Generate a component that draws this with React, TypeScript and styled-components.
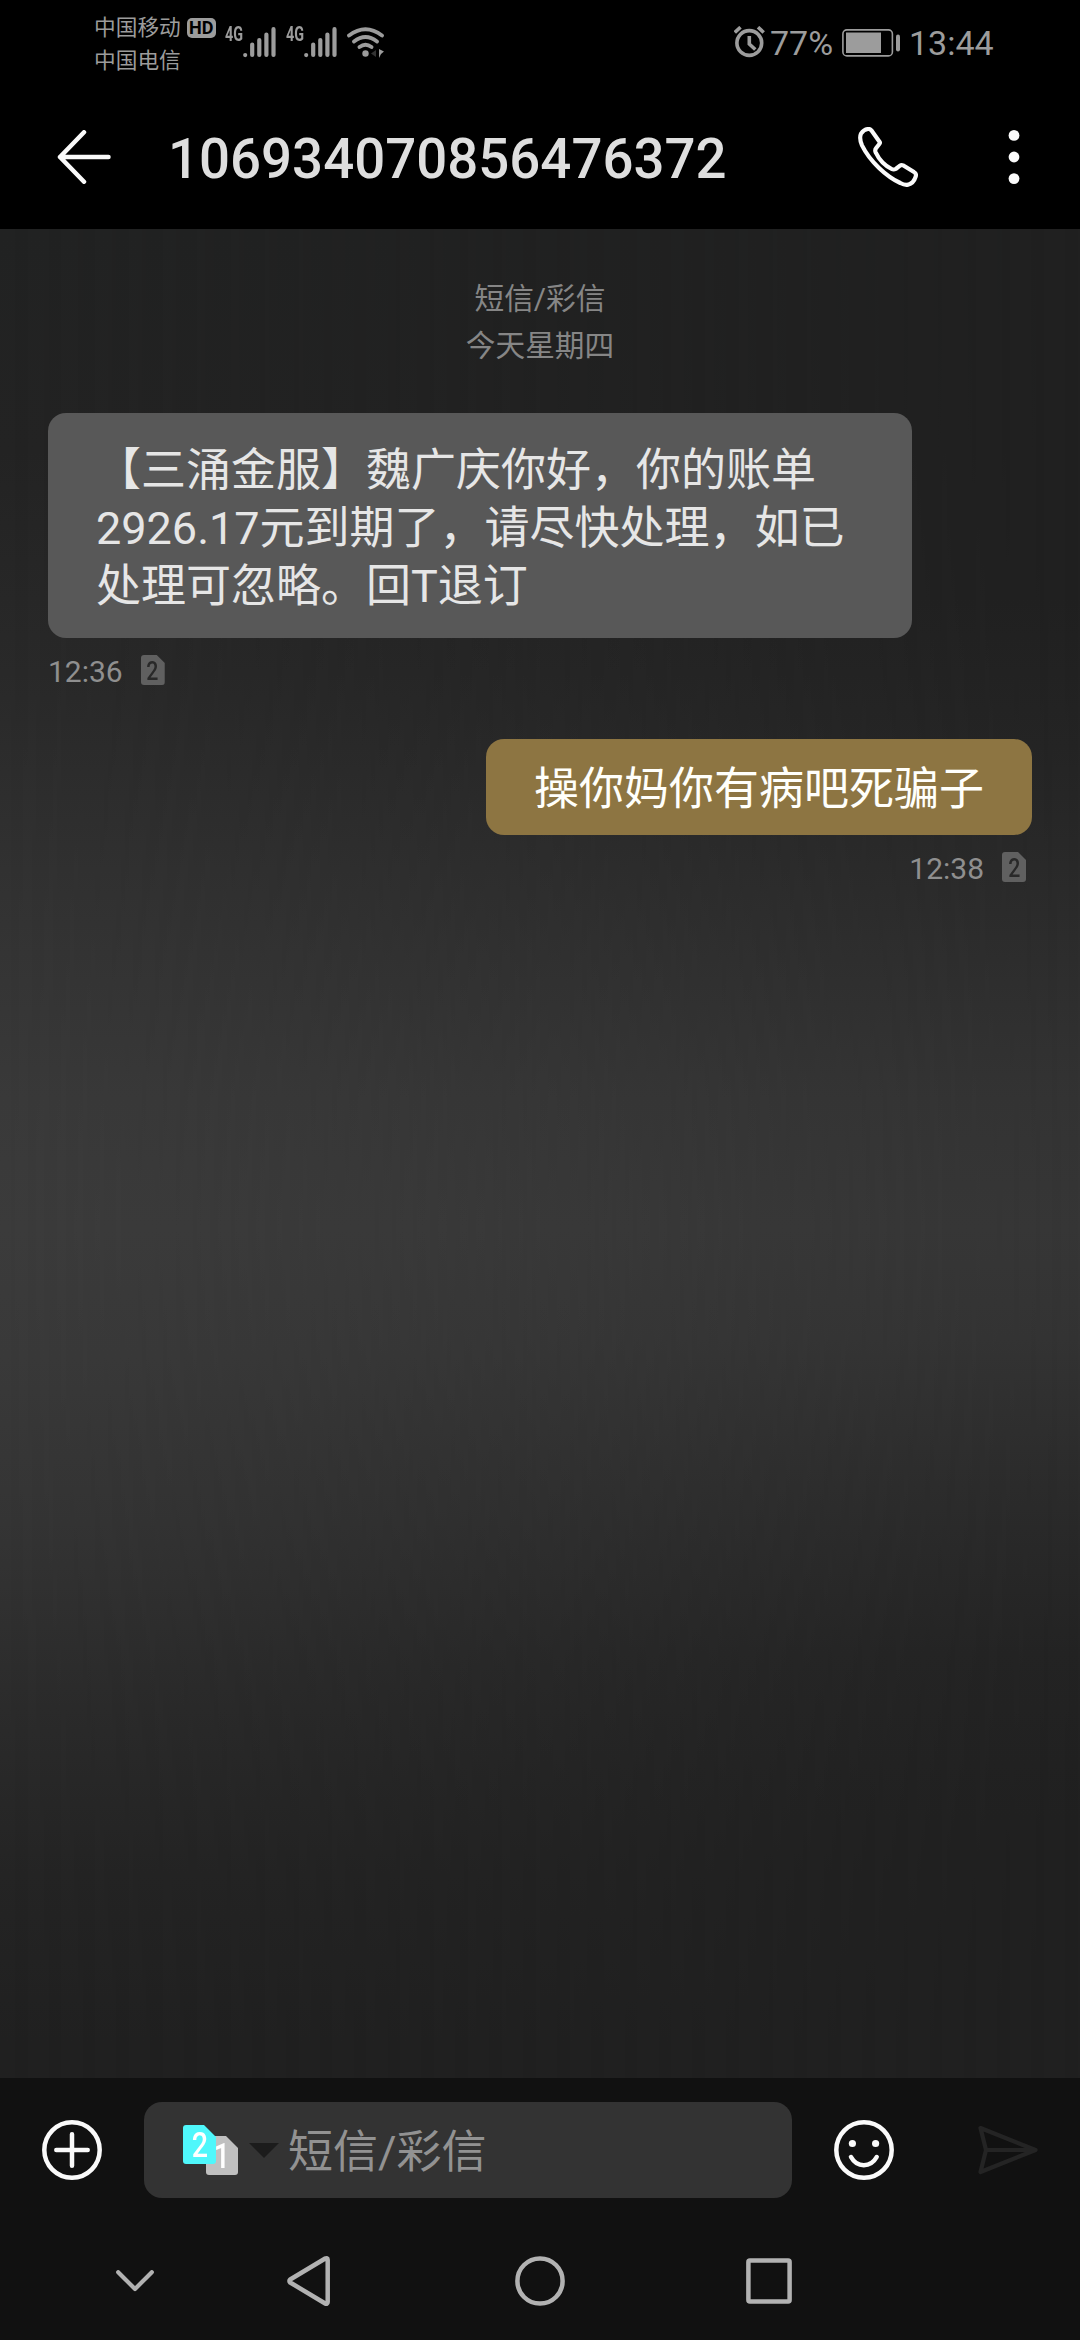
import React from 'react';
import styled, { createGlobalStyle } from 'styled-components';

const Global = createGlobalStyle`
  * { box-sizing: border-box; }
  body { margin: 0; background: #000; }
  svg { display: block; flex: none; }
`;

const Screen = styled.div`
  width: 1080px;
  height: 2340px;
  display: flex;
  flex-direction: column;
  overflow: hidden;
  background: #111;
  font-family: Roboto, 'Noto Sans CJK SC', sans-serif;
`;

const StatusBar = styled.div`
  height: 84px;
  flex: none;
  display: flex;
  justify-content: space-between;
  padding: 0 88px 0 94px;
  background: #000;
  color: #9c9c9c;
`;

const StatusGroup = styled.div`
  display: flex;
  align-items: flex-start;
`;

const Carriers = styled.div`
  display: flex;
  flex-direction: column;
  padding-top: 11px;
  font-size: 21.7px;
  line-height: 33px;
`;

const HdBadge = styled.div`
  width: 29px;
  height: 20px;
  margin: 18px 9px 0 6px;
  border-radius: 5px;
  background: #9c9c9c;
  color: #000;
  font-size: 18px;
  font-weight: 700;
  line-height: 20px;
  text-align: center;
`;

const Network = styled.div`
  display: flex;
  margin-right: 10px;
`;

const NetworkLabel = styled.span`
  width: 18px;
  margin-top: 25px;
  font-size: 20px;
  font-weight: 700;
  line-height: 18px;

  span {
    display: inline-block;
    transform: scaleX(0.72);
    transform-origin: left;
  }
`;

const Offset = styled.div<{ $top: number }>`
  padding-top: ${(p) => p.$top}px;
`;

const StatusText = styled.span<{ $width: number; $indent: number }>`
  width: ${(p) => p.$width}px;
  padding: 22px 0 0 ${(p) => p.$indent}px;
  font-size: 34px;
  line-height: 42px;
  white-space: nowrap;
`;

const Header = styled.header`
  height: 145px;
  flex: none;
  display: flex;
  align-items: center;
  padding: 0 60px 0 57px;
  background: #000;
`;

const Title = styled.h1`
  margin: 4px 0 0 57px;
  flex: 1;
  color: #dedede;
  font-size: 54.6px;
  font-weight: 500;
  line-height: 64px;
`;

const HeaderIcons = styled.div`
  display: flex;
  align-items: center;
  gap: 90px;
`;

const Chat = styled.main`
  position: relative;
  isolation: isolate;
  flex: 1;
  display: flex;
  flex-direction: column;
  padding: 46px 48px 0;
  background: linear-gradient(180deg, #202020 0%, #202020 20%, #242424 28%, #2b2b2b 37%, #333333 47%, #363636 54%, #333333 60%, #2b2b2b 68%, #232323 77%, #202020 86%, #202020 100%);

  &::before {
    content: '';
    position: absolute;
    inset: 0;
    z-index: -1;
    background: linear-gradient(180deg, #212222 0%, #232323 12%, #292929 24%, #323232 36%, #393939 47%, #3b3b3b 54%, #393939 61%, #343434 70%, #2b2b2b 80%, #242424 89%, #202020 98%);
    mask-image: linear-gradient(90deg, #000 0%, transparent 100%);
  }
`;

const DateLabel = styled.div`
  color: #868686;
  font-size: 29.7px;
  line-height: 47px;
  text-align: center;
`;

const Message = styled.section<{ $sent?: boolean }>`
  display: flex;
  flex-direction: column;
  align-items: ${(p) => (p.$sent ? 'flex-end' : 'flex-start')};
  margin-top: ${(p) => (p.$sent ? 54 : 44)}px;
`;

const Bubble = styled.div<{ $sent?: boolean }>`
  width: ${(p) => (p.$sent ? 546 : 864)}px;
  height: ${(p) => (p.$sent ? 96 : 225)}px;
  padding: ${(p) => (p.$sent ? '22px 48px 0' : '29px 48px 0')};
  border-radius: 18px;
  background: ${(p) => (p.$sent ? '#8d7542' : '#585858')};
  color: ${(p) => (p.$sent ? '#fffffb' : '#e6e6e6')};
  font-size: 45px;
  line-height: 58px;
  white-space: nowrap;
`;

const Meta = styled.div<{ $sent?: boolean }>`
  display: flex;
  align-items: center;
  gap: 18px;
  height: 30px;
  margin-top: 17px;
  padding-right: ${(p) => (p.$sent ? 6 : 0)}px;
  color: #8f8f8f;
  font-size: 30px;
  line-height: 30px;
`;

const MetaTime = styled.span`
  padding-top: 3px;
`;

const SimCard = styled.div<{ $fill: string; $ink: string; $w: number; $h: number; $size: number; $cut: number }>`
  width: ${(p) => p.$w}px;
  height: ${(p) => p.$h}px;
  border-radius: 3px;
  background: ${(p) => p.$fill};
  color: ${(p) => p.$ink};
  clip-path: polygon(0 0, calc(100% - ${(p) => p.$cut}px) 0, 100% ${(p) => p.$cut}px, 100% 100%, 0 100%);
  font-size: ${(p) => p.$size}px;
  font-weight: 500;
  line-height: ${(p) => p.$h + 2}px;
  text-align: center;

  span {
    display: inline-block;
    transform: scaleX(0.82);
  }
`;

const Composer = styled.footer`
  height: 144px;
  flex: none;
  display: flex;
  align-items: center;
  padding: 0 42px;
  background: #111;
`;

const Field = styled.div`
  width: 648px;
  height: 96px;
  margin: 0 42px;
  padding-left: 39px;
  display: flex;
  align-items: center;
  border-radius: 18px;
  background: #333;
`;

const SimPair = styled.div`
  position: relative;
  width: 55px;
  height: 50px;
  margin-right: 11px;
`;

const Front = styled.div`
  position: absolute;
  left: 0;
  top: 0;
`;

const Back = styled.div`
  position: absolute;
  right: 0;
  bottom: 0;
`;

const Placeholder = styled.span`
  margin: 5px 0 0 9px;
  color: #929292;
  font-size: 45px;
  line-height: 60px;
`;

const SendSlot = styled.div`
  margin-left: auto;
`;

const NavBar = styled.nav`
  height: 118px;
  flex: none;
  display: flex;
  align-items: center;
  padding: 0 0 0 116px;
  background: #111;
`;

const NavItem = styled.div<{ $left?: number }>`
  margin-left: ${(p) => p.$left ?? 0}px;
`;

const Signal = () => (
  <svg width="33" height="31" viewBox="0 0 33 31" stroke="#9c9c9c" strokeWidth="4.2" strokeLinecap="round">
    <path d="M2.2 28v.1M9.2 17.500V28M16.300 13V28M23.400 7.500V28M30.500 2.200V28" />
  </svg>
);

const Wifi = () => (
  <svg width="38" height="32" viewBox="0 0 38 32" fill="none" stroke="#9c9c9c" strokeWidth="3.8" strokeLinecap="round">
    <path d="M2 8.500Q18.500-4 35 8.500M7 14.500Q18.500 5.500 30 14.500M12.500 20Q18.500 15.500 24.500 20" />
    <circle cx="18.500" cy="26.500" r="3.200" fill="#9c9c9c" stroke="none" />
    <path d="M29 23v7l-5-3.500z" fill="#333" stroke="none" />
    <path d="M32 22v9l2-4 3-2.500z" fill="#9c9c9c" stroke="none" />
  </svg>
);

const Alarm = () => (
  <svg width="31" height="32" viewBox="0 0 31 32" fill="none" stroke="#9c9c9c" strokeWidth="3.6">
    <circle cx="15.300" cy="17" r="12.400" />
    <path d="M15.300 10v8l6 5.500" strokeWidth="3.600" />
    <path d="M.8 6.500L6.500 1.200M24 1.200l5.700 5.300" strokeWidth="3.600" />
  </svg>
);

const Battery = () => (
  <svg width="59" height="28" viewBox="0 0 59 28" fill="#9c9c9c">
    <rect x=".9" y=".9" width="49.500" height="26" rx="4" fill="none" stroke="#9c9c9c" strokeWidth="1.600" />
    <rect x="4" y="3.500" width="35" height="20.500" />
    <rect x="54" y="5.500" width="4" height="17" rx="2" />
  </svg>
);

const BackArrow = () => (
  <svg width="54" height="54" viewBox="0 0 54 54" fill="none" stroke="#fafafa" strokeWidth="4.500" strokeLinecap="round" strokeLinejoin="round">
    <path d="M51.500 27H3M27 2.300L3 27l24 24.700" />
  </svg>
);

const Phone = () => (
  <svg width="60" height="60" viewBox="894 111 180 180" fill="none" stroke="#fafafa" strokeWidth="12.500" strokeLinejoin="round">
    <path d="M903 131Q912 118 924 117Q930 116 934 121L959 156Q961 159 958 162L948 175Q944 180 947 187C957 208 977 228 995 237Q1001 240 1007 237L1020 227Q1024 224 1029 226L1062 246Q1070 250 1067 260Q1061 280 1044 284Q1034 286 1021 279C980 260 930 215 906 166C900 152 898 142 903 131Z" />
  </svg>
);

const More = () => (
  <svg width="12" height="54" viewBox="0 0 12 54" fill="#fafafa">
    <circle cx="6" cy="5.400" r="5.400" />
    <circle cx="6" cy="27" r="5.400" />
    <circle cx="6" cy="48.600" r="5.400" />
  </svg>
);

const Add = () => (
  <svg width="60" height="60" viewBox="0 0 60 60" fill="none" stroke="#fafafa" strokeWidth="4.500" strokeLinecap="round">
    <circle cx="30" cy="30" r="27.700" />
    <path d="M14.300 30h31.400M30 14.300v31.400" />
  </svg>
);

const Caret = () => (
  <svg width="30" height="15" viewBox="0 0 30 15">
    <path d="M0 0h30L15 15z" fill="#1c1c1c" />
  </svg>
);

const Smile = () => (
  <svg width="60" height="60" viewBox="0 0 60 60" fill="none" stroke="#fafafa" strokeWidth="4.500" strokeLinecap="round">
    <circle cx="30" cy="30" r="27.700" />
    <path d="M17 37Q21.500 45.200 29.800 45.200T42.700 37" />
    <circle cx="18.400" cy="23.500" r="3.600" fill="#fafafa" stroke="none" />
    <circle cx="41.600" cy="23.500" r="3.600" fill="#fafafa" stroke="none" />
  </svg>
);

const Send = () => (
  <svg width="60" height="50" viewBox="0 0 60 50" fill="none" stroke="#242424" strokeWidth="4.200" strokeLinecap="round" strokeLinejoin="round">
    <path d="M2.500 3L57.500 25 2.500 47 8 25zM8 25h49" />
  </svg>
);

const Chevron = () => (
  <svg width="38" height="22" viewBox="0 0 38 22" fill="none" stroke="#b2b2b2" strokeWidth="4.200" strokeLinecap="round" strokeLinejoin="round">
    <path d="M2.200 2.200L19 19 35.800 2.200" />
  </svg>
);

const NavBack = () => (
  <svg width="43" height="50" viewBox="0 0 43 50" fill="none" stroke="#b2b2b2" strokeWidth="4.500" strokeLinejoin="round">
    <path d="M3.200 23.500L37.800 2.700Q40.700 1.500 40.700 4V46Q40.700 48.500 37.800 47.300L3.200 26.500Q1.600 25 3.200 23.500Z" />
  </svg>
);

const NavHome = () => (
  <svg width="50" height="50" viewBox="0 0 50 50" fill="none" stroke="#b2b2b2" strokeWidth="4.500">
    <circle cx="25" cy="25" r="22.600" />
  </svg>
);

const NavRecent = () => (
  <svg width="46" height="46" viewBox="0 0 46 46" fill="none" stroke="#b2b2b2" strokeWidth="4.500">
    <rect x="2.400" y="2.400" width="41.200" height="41.200" rx="1.500" />
  </svg>
);

const SmallSim = () => (
  <SimCard $fill="#606060" $ink="#292929" $w={24} $h={30} $size={26} $cut={8}><span>2</span></SimCard>
);

export default function App() {
  return (
    <Screen>
      <Global />
      <StatusBar>
        <StatusGroup>
          <Carriers>
            <span>中国移动</span>
            <span>中国电信</span>
          </Carriers>
          <HdBadge>HD</HdBadge>
          {[0, 1].map((n) => (
            <Network key={n}>
              <NetworkLabel><span>4G</span></NetworkLabel>
              <Offset $top={27}><Signal /></Offset>
            </Network>
          ))}
          <Offset $top={27}><Wifi /></Offset>
        </StatusGroup>
        <StatusGroup>
          <Offset $top={26}><Alarm /></Offset>
          <StatusText $width={77} $indent={5}>77%</StatusText>
          <Offset $top={29}><Battery /></Offset>
          <StatusText $width={91} $indent={8}>13:44</StatusText>
        </StatusGroup>
      </StatusBar>
      <Header>
        <BackArrow />
        <Title>106934070856476372</Title>
        <HeaderIcons>
          <Phone />
          <More />
        </HeaderIcons>
      </Header>
      <Chat>
        <DateLabel>短信/彩信</DateLabel>
        <DateLabel>今天星期四</DateLabel>
        <Message>
          <Bubble>
            【三涌金服】魏广庆你好，你的账单<br />
            2926.17元到期了，请尽快处理，如已<br />
            处理可忽略。回T退订
          </Bubble>
          <Meta><MetaTime>12:36</MetaTime><SmallSim /></Meta>
        </Message>
        <Message $sent>
          <Bubble $sent>操你妈你有病吧死骗子</Bubble>
          <Meta $sent><MetaTime>12:38</MetaTime><SmallSim /></Meta>
        </Message>
      </Chat>
      <Composer>
        <Add />
        <Field>
          <SimPair>
            <Back><SimCard $fill="#c0c0c0" $ink="#fff" $w={32} $h={39} $size={35} $cut={12}><span>1</span></SimCard></Back>
            <Front><SimCard $fill="#4ff7fb" $ink="#fff" $w={33} $h={39} $size={35} $cut={12}><span>2</span></SimCard></Front>
          </SimPair>
          <Caret />
          <Placeholder>短信/彩信</Placeholder>
        </Field>
        <Smile />
        <SendSlot><Send /></SendSlot>
      </Composer>
      <NavBar>
        <NavItem><Chevron /></NavItem>
        <NavItem $left={133}><NavBack /></NavItem>
        <NavItem $left={185}><NavHome /></NavItem>
        <NavItem $left={181}><NavRecent /></NavItem>
      </NavBar>
    </Screen>
  );
}
